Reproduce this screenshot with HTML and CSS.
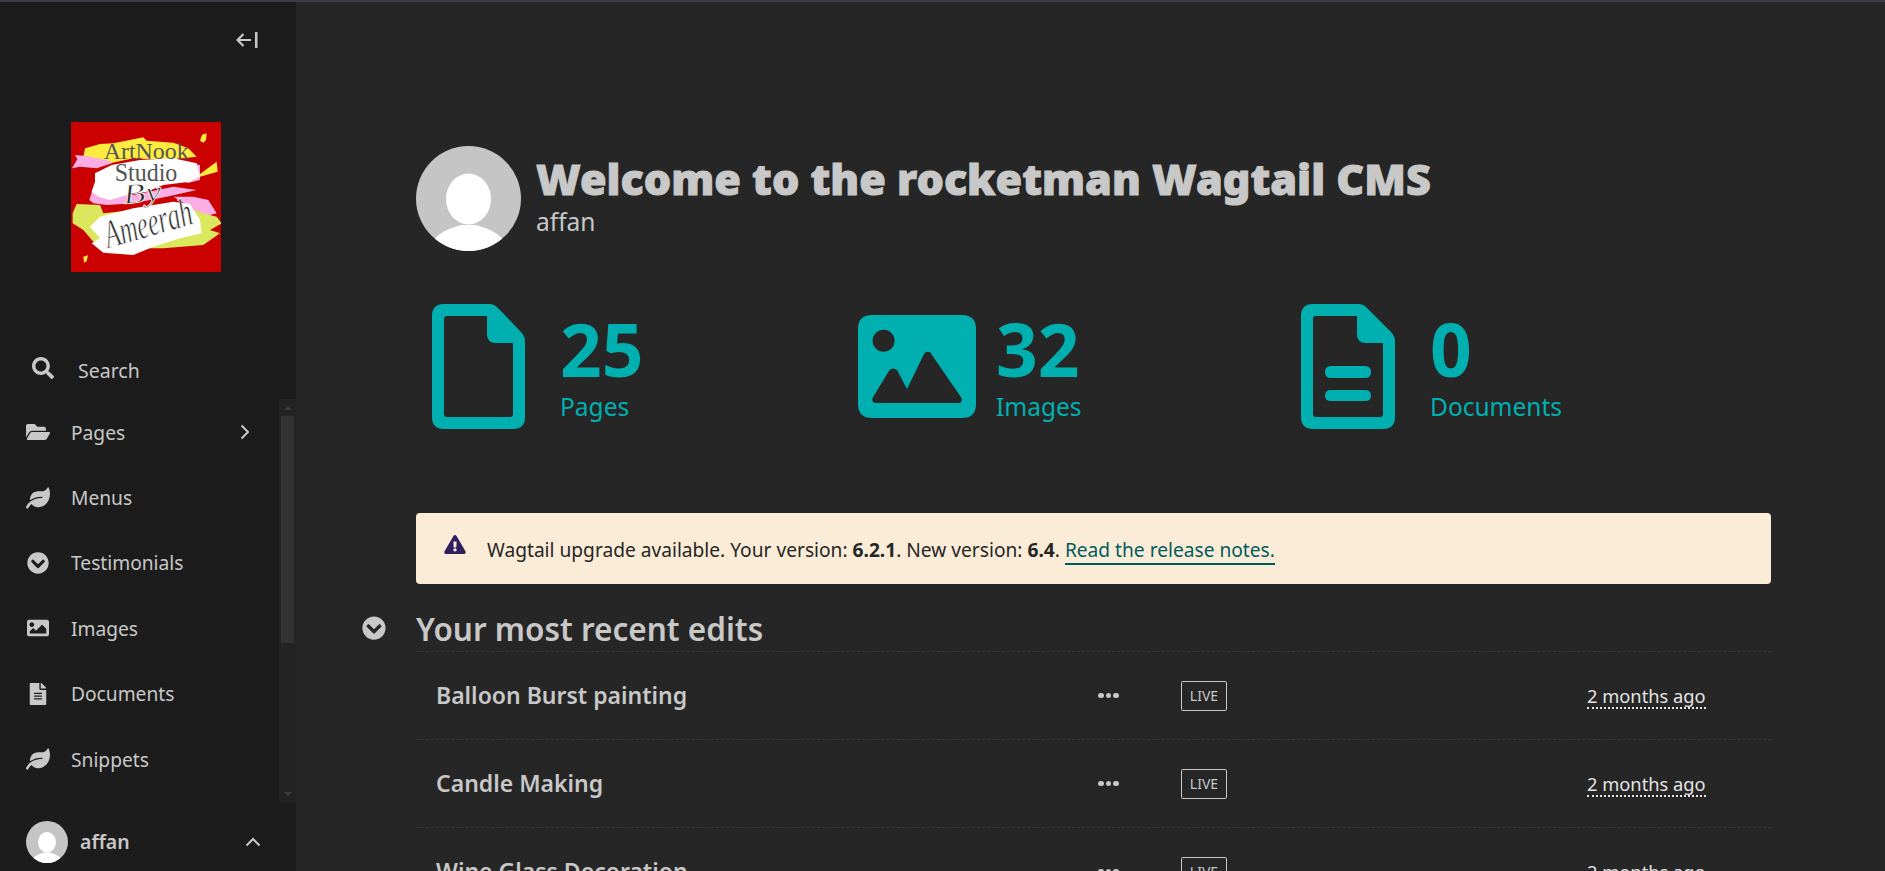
FILE: index.html
```html
<!DOCTYPE html>
<html lang="en">
<head>
    <meta charset="UTF-8">
    <meta name="viewport" content="width=device-width, initial-scale=1.0">
    <title>Dashboard - Wagtail</title>
    <link rel="stylesheet" href="styles.css">
</head>
<body>
    <!-- shared icons -->
    <svg class="sprite" xmlns="http://www.w3.org/2000/svg">
        <symbol id="i-search" viewBox="0 0 512 512"><path d="M505 442.7L405.3 343c-4.5-4.5-10.6-7-17-7H372c27.6-35.3 44-79.7 44-128C416 93.1 322.9 0 208 0S0 93.1 0 208s93.1 208 208 208c48.3 0 92.7-16.4 128-44v16.3c0 6.4 2.5 12.5 7 17l99.7 99.7c9.4 9.4 24.6 9.4 33.9 0l28.3-28.3c9.4-9.4 9.4-24.6.1-34zM208 336c-70.7 0-128-57.2-128-128 0-70.7 57.2-128 128-128 70.7 0 128 57.2 128 128 0 70.7-57.2 128-128 128z"/></symbol>
        <symbol id="i-folder" viewBox="0 0 576 512"><path d="M572.694 292.093L500.27 416.248A63.997 63.997 0 0 1 444.989 448H45.025c-18.523 0-30.064-20.093-20.731-36.093l72.424-124.155A64 64 0 0 1 152 256h399.964c18.523 0 30.064 20.093 20.73 36.093zM152 224h328v-48c0-26.51-21.49-48-48-48H272l-64-64H48C21.49 64 0 85.49 0 112v278.046l69.077-118.418C86.214 242.25 117.989 224 152 224z"/></symbol>
        <symbol id="i-leaf" viewBox="0 0 576 512"><path d="M546.2 9.7c-5.6-12.5-21.6-13-28.3-1.2C486.9 62.4 431.4 96 368 96h-80C182 96 96 182 96 288c0 7 .8 13.7 1.5 20.5C161.3 262.8 253.4 224 384 224c8.8 0 16 7.2 16 16s-7.2 16-16 16C132.6 256 26 410.1 2.4 468c-6.6 16.3 1.2 34.9 17.5 41.6 16.4 6.8 35-1.1 41.8-17.3 1.5-3.6 20.9-47.9 71.9-90.6 32.4 43.9 94 85.8 174.9 77.2C465.5 467.5 576 326.7 576 154.3c0-50.2-10.8-102.2-29.8-144.6z"/></symbol>
        <symbol id="i-chevron-circle" viewBox="0 0 512 512"><path d="M504 256c0 137-111 248-248 248S8 393 8 256 119 8 256 8s248 111 248 248zM273 369.9l135.5-135.5c9.4-9.4 9.4-24.6 0-33.9l-17-17c-9.4-9.4-24.6-9.4-33.9 0L256 285.1 154.4 183.5c-9.4-9.4-24.6-9.4-33.9 0l-17 17c-9.4 9.4-9.4 24.6 0 33.9L239 369.9c9.4 9.4 24.6 9.4 34 0z"/></symbol>
        <symbol id="i-image" viewBox="0 0 512 512"><path d="M464 448H48c-26.51 0-48-21.49-48-48V112c0-26.51 21.49-48 48-48h416c26.51 0 48 21.49 48 48v288c0 26.51-21.49 48-48 48zM112 120c-30.928 0-56 25.072-56 56s25.072 56 56 56 56-25.072 56-56-25.072-56-56-56zM64 384h384V272l-87.515-87.515c-4.686-4.686-12.284-4.686-16.971 0L208 320l-55.515-55.515c-4.686-4.686-12.284-4.686-16.971 0L64 336v48z"/></symbol>
        <symbol id="i-file" viewBox="0 0 384 512"><path d="M224 136V0H24C10.7 0 0 10.7 0 24v464c0 13.3 10.7 24 24 24h336c13.3 0 24-10.7 24-24V160H248c-13.2 0-24-10.8-24-24zm64 236c0 6.6-5.4 12-12 12H108c-6.6 0-12-5.4-12-12v-8c0-6.6 5.4-12 12-12h168c6.6 0 12 5.4 12 12v8zm0-64c0 6.6-5.4 12-12 12H108c-6.6 0-12-5.4-12-12v-8c0-6.6 5.4-12 12-12h168c6.6 0 12 5.4 12 12v8zm0-72v8c0 6.6-5.4 12-12 12H108c-6.6 0-12-5.4-12-12v-8c0-6.6 5.4-12 12-12h168c6.6 0 12 5.4 12 12zm96-114.1v6.1H256V0h6.1c6.4 0 12.5 2.5 17 7l97.9 98c4.5 4.5 7 10.6 7 16.9z"/></symbol>
        <symbol id="i-warning" viewBox="0 0 576 512"><path d="M569.517 440.013C587.975 472.007 564.806 512 527.94 512H48.054c-36.937 0-59.999-40.055-41.577-71.987L246.423 23.985c18.467-32.009 64.72-31.951 83.154 0l239.94 416.028zM288 354c-25.405 0-46 20.595-46 46s20.595 46 46 46 46-20.595 46-46-20.595-46-46-46zm-43.673-165.346l7.418 136c.347 6.364 5.609 11.346 11.982 11.346h48.546c6.373 0 11.635-4.982 11.982-11.346l7.418-136c.375-6.874-5.098-12.654-11.982-12.654h-63.383c-6.884 0-12.356 5.78-11.981 12.654z"/></symbol>
        <symbol id="i-avatar" viewBox="0 0 105 105"><rect width="105" height="105" fill="#c5c5c5"/><ellipse cx="52.5" cy="53" rx="22.5" ry="25.500" fill="#fff"/><path d="M18 94c6-9 20-13 28-15h13c8 2 22 6 28 15v11H18z" fill="#fff"/></symbol>
    </svg>

    <div class="topstrip"></div>
    <div class="layout">
        <aside class="sidebar">
            <button class="collapse" type="button" aria-label="Collapse">
                <svg width="22" height="16" viewBox="0 0 22 16"><path d="M1 8h14M7.500 2L1.500 8l6 6" fill="none" stroke="currentColor" stroke-width="2.200"/><rect x="19" y="0" width="2.500" height="16" fill="currentColor"/></svg>
            </button>

            <div class="logo">
                <svg width="150" height="150" viewBox="213 366 450 450">
                    <rect x="213" y="366" width="450" height="450" fill="#cb0000"/>
                    <path d="M250 470l5-25 45-13 40-2 90-18 10 10 80 6 45 17 25 25-90 10-100-5-70 15-40-10zM600 522l50-37 3 30-53 15zM600 422l6-18 14-4-2 20-8 8zM250 770l14-4-4 18-8 4z" fill="#fdec3f"/>
                    <path d="M216 505l16-27-7-13 35 3 60 12 20 8-50 17-50-5zM570 490l30 5v45l-40 10zM268 600l12-40 20 25h100l120-25 70 10-90 20-100 20-80 5-40-5zM520 590h60l45 10 25 40-40 10-40-30z" fill="#fbaee6"/>
                    <path d="M285 520l50-25 85-15 100-5 70 15 10 40-30 15-80 10-50 20-60 10-50 15-35-10-20-15 10-30z" fill="#fff"/>
                    <path d="M218 640l12-28 70 3 10 25 90-10 130-20 80 30 40 10 15 20-35 20 30 10-50 35-120 10H380l-30-15-70-5-30-35-32-20z" fill="#dbe85e"/>
                    <path d="M270 680l30-30 100-25 120-20 50 7 30 48 5 40-65 15-80 25-60 25-90-7-35-28 25-15z" fill="#fff"/>
                    <text class="logo-serif" x="311" y="478" font-size="72" textLength="255" lengthAdjust="spacingAndGlyphs">ArtNook</text>
                    <text class="logo-serif" x="344" y="544" font-size="76" textLength="188" lengthAdjust="spacingAndGlyphs">Studio</text>
                    <text class="logo-script" x="372" y="612" font-size="84" textLength="115" lengthAdjust="spacingAndGlyphs" transform="rotate(-6 372 612)">By</text>
                    <text class="logo-script" x="325" y="745" font-size="120" textLength="270" lengthAdjust="spacingAndGlyphs" transform="rotate(-16 325 745)">Ameerah</text>
                </svg>
            </div>

            <a class="search-link" href="#">
                <svg class="search-icon"><use href="#i-search"/></svg>
                <span>Search</span>
            </a>

            <div class="nav-scroll">
                <ul class="nav">
                    <li class="nav-item">
                        <svg class="nav-icon"><use href="#i-folder"/></svg><span>Pages</span>
                        <svg class="nav-arrow" width="10" height="16" viewBox="0 0 10 16"><path d="M1.500 1.500L8 8l-6.500 6.500" fill="none" stroke="currentColor" stroke-width="2"/></svg>
                    </li>
                    <li class="nav-item"><svg class="nav-icon"><use href="#i-leaf"/></svg><span>Menus</span></li>
                    <li class="nav-item"><svg class="nav-icon"><use href="#i-chevron-circle"/></svg><span>Testimonials</span></li>
                    <li class="nav-item"><svg class="nav-icon"><use href="#i-image"/></svg><span>Images</span></li>
                    <li class="nav-item"><svg class="nav-icon"><use href="#i-file"/></svg><span>Documents</span></li>
                    <li class="nav-item"><svg class="nav-icon"><use href="#i-leaf"/></svg><span>Snippets</span></li>
                </ul>
                <div class="scrollbar">
                    <div class="scroll-up"></div>
                    <div class="scroll-thumb"></div>
                    <div class="scroll-down"></div>
                </div>
            </div>

            <div class="account">
                <svg class="account-avatar"><use href="#i-avatar"/></svg>
                <span class="account-name">affan</span>
                <svg class="account-arrow" width="16" height="10" viewBox="0 0 16 10"><path d="M1.500 8.500L8 2l6.500 6.500" fill="none" stroke="currentColor" stroke-width="2"/></svg>
            </div>
        </aside>

        <main class="main">
            <header class="welcome">
                <svg class="welcome-avatar"><use href="#i-avatar"/></svg>
                <div class="welcome-text">
                    <h1>Welcome to the rocketman Wagtail CMS</h1>
                    <div class="welcome-user">affan</div>
                </div>
            </header>

            <ul class="stats">
                <li class="stat stat-pages">
                    <svg class="stat-icon" width="93" height="125" viewBox="0 0 93 125"><path fill-rule="evenodd" d="M12 0H58Q62 0 66 4L89 28Q93 32 93 38V113Q93 125 81 125H12Q0 125 0 113V12Q0 0 12 0ZM15 12Q12 12 12 15V110Q12 113 15 113H78Q81 113 81 110V39H64Q55 39 55 30V12Z"/></svg>
                    <div><div class="stat-num">25</div><div class="stat-label">Pages</div></div>
                </li>
                <li class="stat stat-image">
                    <svg class="stat-icon" width="118" height="103" viewBox="0 0 118 103"><path fill-rule="evenodd" d="M14 0H104Q118 0 118 14V89Q118 103 104 103H14Q0 103 0 89V14Q0 0 14 0ZM25.600 14.700A11 11 0 1 0 25.601 36.700A11 11 0 1 0 25.600 14.700ZM69.700 36.700Q67 36.700 65.500 40L49 74L39 55Q35 52 31.500 55L14.500 83Q13 88 19 88H100Q105 88 103.500 83L74 40Q72.500 36.700 69.700 36.700Z"/></svg>
                    <div><div class="stat-num">32</div><div class="stat-label">Images</div></div>
                </li>
                <li class="stat">
                    <svg class="stat-icon" width="94" height="125" viewBox="0 0 94 125"><path fill-rule="evenodd" d="M12 0H58Q62 0 66 4L90 28Q94 32 94 38V113Q94 125 82 125H12Q0 125 0 113V12Q0 0 12 0ZM15 12Q12 12 12 15V110Q12 113 15 113H79Q82 113 82 110V39H65Q56 39 56 30V12ZM30 62H64Q70 62 70 68Q70 74 64 74H30Q24 74 24 68Q24 62 30 62ZM30 86H64Q70 86 70 91.500Q70 97 64 97H30Q24 97 24 91.500Q24 86 30 86Z"/></svg>
                    <div><div class="stat-num">0</div><div class="stat-label">Documents</div></div>
                </li>
            </ul>

            <div class="upgrade">
                <svg class="upgrade-icon"><use href="#i-warning"/></svg>
                <p>Wagtail upgrade available. Your version: <strong>6.2.1</strong>. New version: <strong>6.4</strong>. <a href="#">Read the release notes.</a></p>
            </div>

            <section class="recent">
                <h2>
                    <svg class="recent-toggle"><use href="#i-chevron-circle"/></svg>
                    Your most recent edits
                </h2>
                <div class="edit-row">
                    <a class="edit-title" href="#">Balloon Burst painting</a>
                    <div class="dots"><i></i><i></i><i></i></div>
                    <div><span class="live">LIVE</span></div>
                    <div class="edit-time"><span>2 months ago</span></div>
                </div>
                <div class="edit-row">
                    <a class="edit-title" href="#">Candle Making</a>
                    <div class="dots"><i></i><i></i><i></i></div>
                    <div><span class="live">LIVE</span></div>
                    <div class="edit-time"><span>2 months ago</span></div>
                </div>
                <div class="edit-row">
                    <a class="edit-title" href="#">Wine Glass Decoration</a>
                    <div class="dots"><i></i><i></i><i></i></div>
                    <div><span class="live">LIVE</span></div>
                    <div class="edit-time"><span>2 months ago</span></div>
                </div>
            </section>
        </main>
    </div>
</body>
</html>
```
FILE: styles.css
```css
* {
    margin: 0;
    padding: 0;
    box-sizing: border-box;
}

html, body {
    height: 100%;
    overflow: hidden;
}

body {
    background-color: #262626;
    color: #c8c8c8;
    font-family: "Noto Sans", "Open Sans", sans-serif;
}

ul {
    list-style: none;
}

a {
    color: inherit;
    text-decoration: none;
}

.sprite {
    display: none;
}

.topstrip {
    height: 2px;
    background-color: #3a3c4a;
}

.layout {
    display: flex;
    height: 869px;
}

/* sidebar */
.sidebar {
    width: 296px;
    flex-shrink: 0;
    display: flex;
    flex-direction: column;
    background-color: #1c1c1c;
}

.collapse {
    align-self: flex-end;
    display: flex;
    margin: 30px 38px 0 0;
    background: none;
    border: none;
    color: #c8c8c8;
}

.logo {
    display: flex;
    height: 150px;
    margin: 74px 0 0 71px;
}

.search-link {
    display: flex;
    align-items: center;
    height: 40px;
    margin-top: 79px;
    padding-left: 32px;
    font-size: 19.5px;
}

.search-link span {
    margin: 0 0 2px 24px;
}

.search-icon {
    width: 22px;
    height: 22px;
    fill: #c8c8c8;
    position: relative;
    top: -3px;
}

.nav-scroll {
    display: flex;
    height: 403px;
    margin-top: 8px;
}

.nav {
    flex: 1;
}

.nav-item {
    display: flex;
    align-items: center;
    height: 65.4px;
    padding: 1px 0 0 26px;
    font-size: 19.2px;
}

.nav-icon {
    width: 24px;
    height: 22px;
    margin-right: 21px;
    fill: #c8c8c8;
}

.nav-arrow {
    margin-left: auto;
    margin-right: 29px;
}

.scrollbar {
    width: 17px;
    display: flex;
    flex-direction: column;
    background-color: #232323;
}

.scroll-up, .scroll-down {
    height: 17px;
    display: flex;
    justify-content: center;
    align-items: center;
}

.scroll-up::before, .scroll-down::before {
    content: "";
    border: 4px solid transparent;
}

.scroll-up::before {
    border-bottom-color: #3d3d3d;
    margin-bottom: 4px;
}

.scroll-down {
    margin-top: auto;
}

.scroll-down::before {
    border-top-color: #3d3d3d;
    margin-top: 4px;
}

.scroll-thumb {
    height: 227px;
    margin: 0 2px;
    background-color: #333;
}

.account {
    display: flex;
    align-items: center;
    flex: 1;
    padding: 10px 35px 0 26px;
}

.account-avatar {
    width: 42px;
    height: 42px;
    border-radius: 50%;
    margin-right: 12px;
}

.account-name {
    font-size: 19.5px;
    font-weight: 600;
}

.account-arrow {
    margin-left: auto;
}

.logo-serif {
    font-family: "Liberation Serif", serif;
    fill: #555;
}

.logo-script {
    font-family: "Liberation Serif", serif;
    font-style: italic;
    fill: #2b2b2b;
    stroke: #fff;
    stroke-width: 2px;
}

/* main column */
.main {
    flex: 1;
    min-width: 0;
    overflow: hidden;
    padding: 144px 114px 0 120px;
}

.welcome {
    display: flex;
    align-items: center;
}

.welcome-avatar {
    width: 105px;
    height: 105px;
    border-radius: 50%;
    margin-right: 15px;
    flex-shrink: 0;
}

.welcome-text {
    margin-top: -9px;
}

h1 {
    font-size: 43.1px;
    font-weight: 900;
    line-height: 56px;
    -webkit-text-stroke: 1px #c8c8c8;
}

.welcome-user {
    font-size: 24.5px;
    line-height: 30px;
}

.stats {
    display: flex;
    align-items: center;
    height: 125px;
    margin-top: 53px;
    padding-left: 16px;
    color: #00b0b1;
}

.stat {
    display: flex;
    align-items: center;
    gap: 35px;
}

.stat-pages {
    width: 426px;
}

.stat-image {
    width: 443px;
    gap: 20px;
}

.stat-icon {
    fill: #00b0b1;
}

.stat-num {
    padding-top: 7px;
    font-size: 73px;
    font-weight: 700;
    line-height: 73px;
}

.stat-label {
    font-size: 24.5px;
    line-height: 43px;
}

.upgrade {
    display: flex;
    align-items: center;
    height: 71px;
    margin-top: 84px;
    padding-left: 28px;
    background-color: #fbecd7;
    color: #262626;
    border-radius: 4px;
    font-size: 19.16px;
}

.upgrade-icon {
    width: 22px;
    height: 19px;
    margin-right: 21px;
    fill: #2e1f5e;
    position: relative;
    top: -4px;
}

.upgrade p {
    padding-top: 2px;
}

.upgrade a {
    color: #005b5e;
    border-bottom: 2px solid #005b5e;
}

.recent {
    margin-top: 18px;
}

h2 {
    position: relative;
    height: 50px;
    font-size: 31.5px;
    font-weight: 600;
    line-height: 54px;
    border-bottom: 1px dashed #383838;
}

.recent-toggle {
    position: absolute;
    left: -54px;
    top: 14px;
    width: 24px;
    height: 24px;
    fill: #c8c8c8;
}

.edit-row {
    display: grid;
    grid-template-columns: 662px 83px 406px 1fr;
    align-items: center;
    height: 88px;
    padding-left: 20px;
    border-bottom: 1px dashed #383838;
}

.edit-title {
    margin-bottom: 2px;
    font-size: 23px;
    font-weight: 600;
}

.dots {
    display: flex;
    gap: 2px;
}

.dots i {
    width: 5.5px;
    height: 5.5px;
    border-radius: 50%;
    background-color: #c8c8c8;
}

.live {
    display: inline-block;
    width: 46px;
    height: 30px;
    border: 1px solid #c8c8c8;
    border-radius: 2px;
    font-size: 14px;
    line-height: 28px;
    text-align: center;
}

.edit-time {
    margin-top: 2px;
}

.edit-time span {
    display: inline-block;
    color: #e4e4e4;
    font-size: 18.3px;
    line-height: 22px;
    border-bottom: 2px dotted #e4e4e4;
}
```
